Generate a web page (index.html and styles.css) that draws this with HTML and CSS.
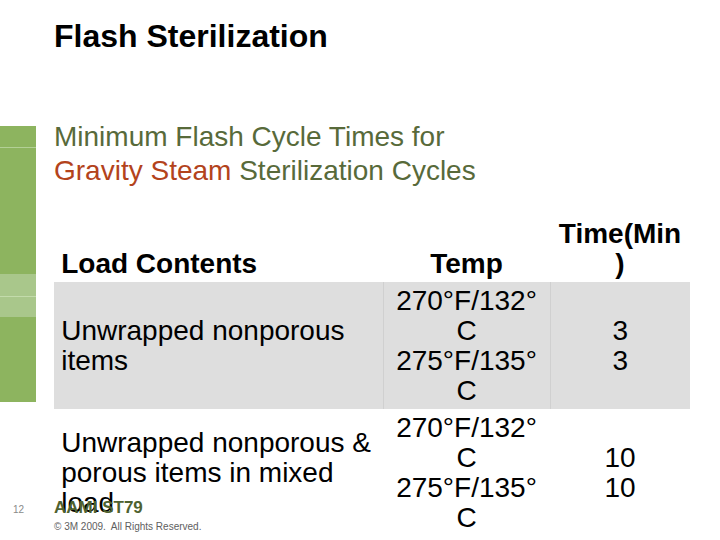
FILE: index.html
```html
<!DOCTYPE html>
<html lang="en">
<head>
<meta charset="utf-8">
<title>Flash Sterilization</title>
<link rel="stylesheet" href="styles.css">
</head>
<body>
<div class="slide">
  <aside class="rail">
    <div class="seg seg-a"></div>
    <div class="seg seg-line"></div>
    <div class="seg seg-b"></div>
    <div class="seg seg-light seg-c"></div>
    <div class="seg seg-line-light"></div>
    <div class="seg seg-light seg-d"></div>
    <div class="seg seg-e"></div>
  </aside>
  <main class="content">
    <h1 class="title">Flash Sterilization</h1>
    <p class="subtitle">Minimum Flash Cycle Times for<br><span class="accent">Gravity Steam</span> Sterilization Cycles</p>
    <table class="cycles">
      <colgroup>
        <col class="c1">
        <col class="c2">
        <col class="c3">
      </colgroup>
      <thead>
        <tr>
          <th class="left">Load Contents</th>
          <th>Temp</th>
          <th>Time(Min)</th>
        </tr>
      </thead>
      <tbody>
        <tr class="shaded">
          <td class="left">Unwrapped nonporous items</td>
          <td>270°F/132°C 275°F/135°C</td>
          <td>3<br>3</td>
        </tr>
        <tr>
          <td class="left">Unwrapped nonporous &amp; porous items in mixed load</td>
          <td>270°F/132°C 275°F/135°C</td>
          <td>10<br>10</td>
        </tr>
      </tbody>
    </table>
  </main>
  <footer class="foot">
    <span class="pagenum">12</span>
    <div class="source">
      <div class="ref">AAMI ST79</div>
      <div class="copy">© 3M 2009.&nbsp; All Rights Reserved.</div>
    </div>
  </footer>
</div>
</body>
</html>
```
FILE: styles.css
```css
html, body {
  margin: 0;
  padding: 0;
  background: #ffffff;
}

.slide {
  position: relative;
  width: 720px;
  height: 540px;
  overflow: hidden;
  display: flex;
  font-family: "Liberation Sans", Arial, sans-serif;
  color: #000000;
}

.rail {
  width: 36px;
  flex: 0 0 36px;
  padding-top: 126px;
  display: flex;
  flex-direction: column;
}

.seg { background: #8db45f; }
.seg-a { height: 21px; }
.seg-line { height: 1px; background: #b3d096; }
.seg-b { height: 126px; }
.seg-light { background: #a9c78b; }
.seg-c { height: 22px; }
.seg-line-light { height: 1px; background: #c3dbab; }
.seg-d { height: 20px; }
.seg-e { height: 85px; }

.content {
  margin-left: 18px;
  display: flex;
  flex-direction: column;
}

.title {
  margin: 20px 0 0 0;
  font-size: 32px;
  line-height: 32px;
  font-weight: bold;
  color: #000000;
}

.subtitle {
  margin: 68px 0 0 0;
  font-size: 28px;
  line-height: 34px;
  color: #586a3a;
}

.accent { color: #b3431c; }

.cycles {
  margin-top: 27px;
  width: 636px;
  table-layout: fixed;
  border-collapse: collapse;
  font-size: 28px;
  line-height: 30px;
}

.c1 { width: 329px; }
.c2 { width: 167px; }
.c3 { width: 140px; }

.cycles th,
.cycles td {
  padding: 3.6px 7.2px;
  text-align: center;
  overflow-wrap: anywhere;
}

.cycles th {
  font-weight: bold;
  vertical-align: bottom;
}

.cycles td {
  font-weight: normal;
  vertical-align: middle;
}

.cycles .left { text-align: left; }

.shaded td {
  background: #dedede;
}

.shaded td + td {
  border-left: 1px solid #d0d0d0;
}

.foot {
  position: absolute;
  left: 0;
  top: 498px;
  display: flex;
  align-items: flex-start;
}

.pagenum {
  width: 54px;
  padding-left: 13px;
  box-sizing: border-box;
  margin-top: 6px;
  font-size: 10px;
  color: #8a8a8a;
}

.ref {
  font-size: 17px;
  line-height: 20px;
  font-weight: bold;
  color: #4f6230;
}

.copy {
  margin-top: 2px;
  font-size: 10px;
  line-height: 14px;
  color: #606060;
}
```
